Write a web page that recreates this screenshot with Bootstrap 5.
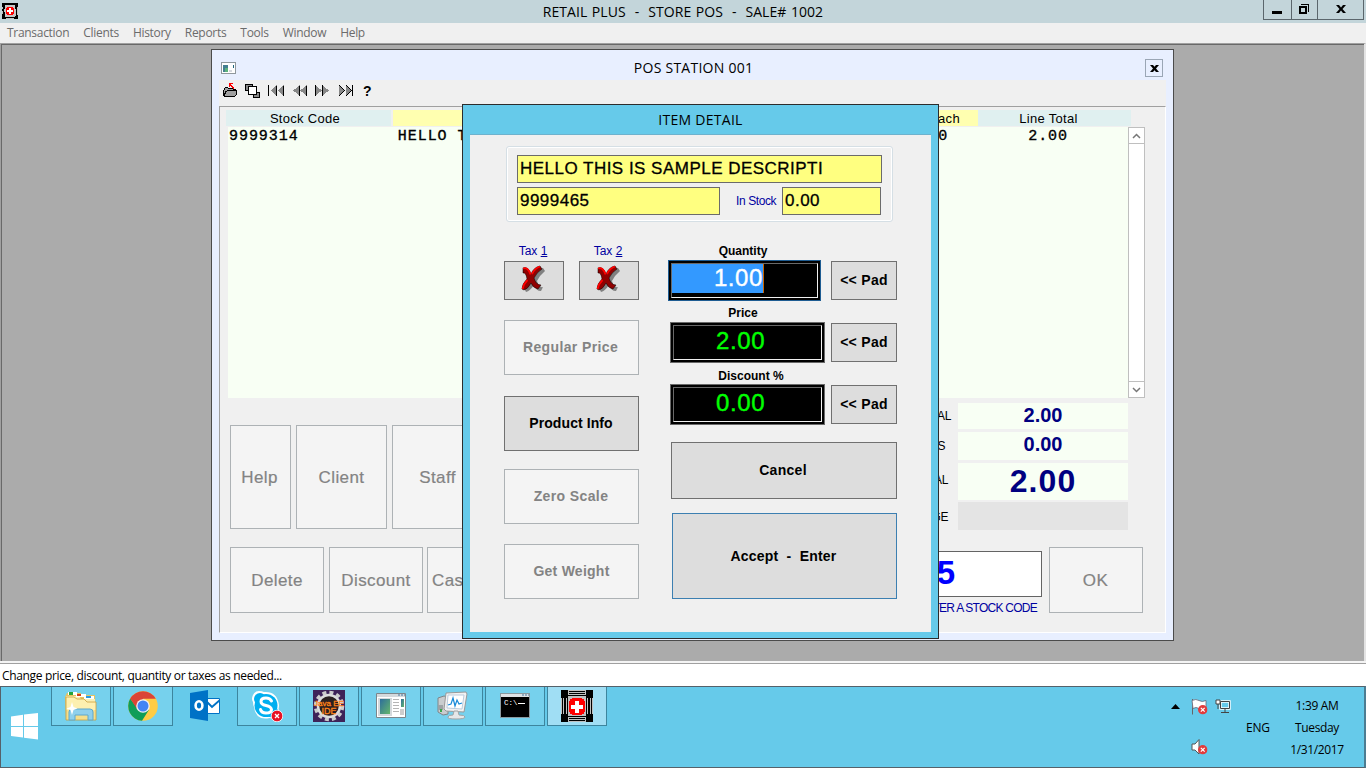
<!DOCTYPE html>
<html lang="en">
<head>
<meta charset="utf-8">
<meta name="viewport" content="width=device-width, initial-scale=1">
<title>Retail Plus - Store POS</title>
<link href="https://cdn.jsdelivr.net/npm/bootstrap@5.3.0/dist/css/bootstrap.min.css" rel="stylesheet">
<style>
html,body{height:768px;overflow:hidden}
body{width:1366px;font-family:"Open Sans","Noto Sans",sans-serif;font-size:12px;line-height:16px;color:#000;background:#ababab}
svg{display:block;flex:none}
.ui-arial{font-family:"Liberation Sans",Arial,sans-serif}
/* main window */
.app-title{height:23px;background:#c3d5da;font-size:14px;line-height:23px}
.app-title .caption{white-space:pre;letter-spacing:.06px;word-spacing:.8px}
.win-ctl{height:20px;border:1px solid #5b666c;border-top:0}
.win-ctl>span{display:flex;align-items:center;justify-content:center;height:19px}
.win-ctl>span+span{border-left:1px solid #5b666c}
.app-menu{height:20px;background:#f0f0f0;color:#6b6b6b;font-size:12px;line-height:20px;padding-left:7px;gap:14px;letter-spacing:-.3px}
.mdi{height:618px;background:#ababab;border-top:1px solid #a0a0a0;border-left:1px solid #a0a0a0;border-right:2px solid #e3e3e3;box-shadow:inset 1px 1px 0 #696969}
.status{height:25px;background:linear-gradient(#f4f4f4 2px,#a0a0a0 2px,#a0a0a0 3px,#fff 3px);padding-top:3px;line-height:24px;padding-left:2px;font-size:12px;letter-spacing:-.34px}
/* station window */
.station{position:absolute;left:210px;top:5px;width:963px;height:592px;background:#e8efff;border:1px solid #4b4b4b;padding:0 7px}
.station-title{height:30px;font-size:14px}
.st-cap{padding:6px 0 0 2px;letter-spacing:.25px}
.close-box{width:18px;height:18px;border:1px solid #9aa6b5;margin:6px 3px 0 auto}
.tools{height:26px;background:#f0f0f0;padding:3px 0 0 3px}
.panel{height:527px;background:#f0f0f0;border:1px solid;border-color:#a0a0a0 #fff #fff #a0a0a0;padding:3px 0 0 6px}
.heads{height:16px;margin-bottom:1px;font-size:13px;line-height:17px;text-align:center;letter-spacing:.3px}
.h-aqua{background:#e0f0f0}.h-yel{background:#ffffb0}
.lines{width:900px;height:271px;margin-left:2px;background:#f8fff4;font:15px/19px "Liberation Mono",monospace;letter-spacing:.95px;-webkit-text-stroke:.35px #000}
.lines>div>span{white-space:pre}
.sbar{width:17px;height:271px;background:#fff;border:1px solid #bfbfbf}
.sbar>span{height:16px;display:flex;align-items:center;justify-content:center}
.pbtn{background:#f4f4f4;border:1px solid #adb2b5;border-radius:0;color:#838383;font-size:17px;line-height:1;letter-spacing:.4px;padding:0;flex:none;display:flex;align-items:center;justify-content:center;-webkit-text-stroke:.2px}
.tall{height:104px}.short{height:66px}
.sum{width:170px;background:#f8fff4;color:#000080;font-weight:700;text-align:center}
.sum-l{width:100px;text-align:right;font-size:12px;letter-spacing:-.4px;padding-right:7px}
.code-in{width:240px;height:46px;background:#fff;border:1px solid #646464;color:#00f;font-weight:700;font-size:33px;line-height:41px;padding-right:86px;text-align:right}
.code-l{color:#0000a0;font-size:12px;text-align:right;padding-right:5px;line-height:22px;letter-spacing:-.75px;white-space:nowrap}
/* item dialog */
.item-dlg{position:absolute;left:461px;top:60px;width:477px;height:535px;background:#66caea;border:1px solid #2c2c2c;padding:0 7px 7px}
.item-cap{height:29px;font-size:14px;line-height:30px;letter-spacing:.28px}
.item-body{height:498px;background:#f0f0f0;border-top:1px solid #6eb2cd}
.group{height:76px;margin:11px 38px 0 36px;border:1px solid #d5dfe5;border-radius:3px;box-shadow:inset 0 0 0 1px #fff;padding:8px 9px 0 10px}
.fld{height:28px;background:#ffff80;border:1px solid #6b6b6b;font-size:17px;line-height:25px;padding-left:2px;letter-spacing:.48px;-webkit-text-stroke:.3px #000}
.navy{color:#0000a0}
.tax{width:60px;padding-right:2px;height:17px;line-height:15px}
.dbtn{background:#ddd;border:1px solid #707070;border-radius:0;color:#000;font-size:14px;font-weight:700;line-height:1;letter-spacing:.08px;padding:0 0 2px;display:flex;align-items:center;justify-content:center;flex:none}
.dbtn.off{background:#f4f4f4;border-color:#adb2b5;color:#838383;letter-spacing:.38px}
.tax-btn{width:60px;height:39px;padding:0 2px 4px 0}
.lbl{font-size:12px;font-weight:700;line-height:14px;height:14px;text-align:center}
.lcd{height:41px;background:#000;border:1px solid #696969;padding:2px;flex:none}
.lcd>div{height:100%;border:1px solid;border-color:#696969 #f0f0f0 #f0f0f0 #696969;color:#0f0;font-size:24px;line-height:29px;letter-spacing:.6px;-webkit-text-stroke:.4px}
.lcd.act{border-color:#1e5c92}
.sel{display:block;background:#39f;color:#fff;height:29px;line-height:28px;text-align:right;border-right:1px solid #c60}
/* taskbar */
.task{height:82px;background:#66caea;border:1px solid #55616a;border-right:2px solid #4c7d92}
.start{width:50px;padding:26px 0 0 9px}
.tb{width:60px;height:39px;margin-right:2px;border:1px solid #3d859e;border-top:0;background:#76d1ed;display:flex;align-items:center;justify-content:center;flex:none}
.tb.plain{background:none;border-color:transparent}
.tb.on{background:#a0def4}
.clock{width:84px;text-align:center;line-height:22px;padding-top:8px;letter-spacing:-.35px;margin-right:5px}
</style>
</head>
<body>
<svg width="0" height="0" class="position-absolute">
 <defs>
  <symbol id="bad" viewBox="0 0 10 10"><circle cx="5" cy="5" r="5" fill="#e23b3b"/><path d="M3 3l4 4M7 3l-4 4" stroke="#fff" stroke-width="1.3"/></symbol>
  <symbol id="cross" viewBox="0 0 25 27"><path d="M6 5q2 0 6 6Q17 3 22 3l2 3q-5 4-8 10 2 7 6 6l-2 4q-5 0-7-6-4 6-8 7l-2-4q5-3 7-8-3-6-5-5z" fill="#808080"/><path d="M2 3q5-2 8 6 3-7 9-8l2 3q-5 3-8 9 2 7 7 7l-3 4q-5-1-7-6-3 6-7 7l-2-1q0-5 5-10Q5 7 2 8z" fill="#900000" stroke="#000" stroke-width=".5"/><path d="M2 3.500q5-2 7.500 6M11 9q3-6 8-7.500M1.500 24q1-5 5-9" fill="none" stroke="#f00" stroke-width="1.800"/></symbol>
 </defs>
</svg>

<header class="app-title position-relative d-flex justify-content-between align-items-start">
 <svg width="16" height="16" viewBox="0 0 16 16" shape-rendering="crispEdges" style="margin:3px 0 0 2px"><path fill="#000" d="M0 0h16v16H0z"/><path fill="#c6c6c6" d="M3 2h10v1h1v10h-1v1H3v-1H2V3h1z"/><path fill="#000" d="M2 3h1v3H2zM13 3h1v3h-1zM2 9h1v4H2z"/><path fill="#c0c0c0" d="M0 4h1v2H0zM0 8h1v3H0zM4 15h8v1H4zM15 4h1v8h-1z"/><path fill="#f00" d="M5 4h6v1h1v6h-1v1H5v-1H4V5h1z"/><path fill="#fff" d="M7 5h2v2h2v2H9v2H7V9H5V7h2z"/></svg>
 <span class="caption position-absolute start-50 translate-middle-x">RETAIL PLUS  -  STORE POS  -  SALE# 1002</span>
 <div class="win-ctl d-flex" style="width:101px;margin-right:2px">
  <span style="width:27px;padding-right:1px"><svg width="10" height="10"><path d="M0 6h10v3H0z"/></svg></span>
  <span style="width:26px;padding:0 2px 2px 0"><svg width="10" height="10" shape-rendering="crispEdges"><path d="M0 2h8v8H0zM2 4v4h4V4z" fill-rule="evenodd"/><path d="M2 0h8v8H9V1H2z"/></svg></span>
  <span class="flex-fill"><svg width="10" height="9"><path d="M0 0h3l2 2.500L7 0h3L6.500 4 10 8H7L5 5.500 3 8H0l3.500-4z"/></svg></span>
 </div>
</header>
<nav class="app-menu d-flex">
 <span>Transaction</span><span>Clients</span><span>History</span><span>Reports</span><span>Tools</span><span>Window</span><span>Help</span>
</nav>

<main class="mdi position-relative overflow-hidden">
 <section class="station">
  <div class="station-title d-flex align-items-center position-relative">
   <svg width="15" height="12" style="margin:5px 0 0 2px" viewBox="0 0 15 12" shape-rendering="crispEdges"><path fill="#8f989d" d="M0 0h15v12H0z"/><path fill="#fff" d="M1 1h13v10H1z"/><path fill="#437f91" d="M2 3h5v7H2z"/><path fill="#5cb27d" d="M4 6h3v4H4z"/><path fill="#d5d8df" d="M8 8h3v2H8z"/><path fill="#23687e" d="M12 3h1v3h-1z"/></svg>
   <span class="position-absolute start-50 translate-middle-x st-cap text-nowrap">POS STATION 001</span>
   <span class="close-box d-flex align-items-center justify-content-center"><svg width="9" height="7"><path d="M0 0h3l1.500 1.800L6 0h3L6 3.500 9 7H6L4.500 5.200 3 7H0l3-3.500z"/></svg></span>
  </div>
  <div class="tools d-flex" style="gap:7px">
   <svg width="16" height="16" viewBox="0 0 16 16" shape-rendering="crispEdges"><path fill="#000" d="M3 4h3v1h6v1h2v1h1v5h-1v1h-1v1H2v-1H1V7h1V5h1z"/><path fill="#a0a0a0" d="M3 5h3v1h5v1H5v1H3v2H2V7h1zM5 8h9v4h-1v1H3v-2h1V9h1z"/><path fill="#f00" d="M7 0h4v1H9v1h1v1h1v1h1v2h-1V5h-1V4H9V3H8v1H7z"/></svg>
   <svg width="16" height="16" viewBox="0 0 16 16" shape-rendering="crispEdges"><path fill="#888" stroke="#000" d="M.5 1.500h7v6h-7zM8.500 9.500h6v5h-6z"/><path fill="#fff" stroke="#000" stroke-width="1" d="M3.500 3.500h8v8h-8z"/></svg>
   <svg width="17" height="16" shape-rendering="crispEdges"><path fill="#888" d="M9 2v11L3 7.500zM16 2v11l-6-5.500z"/><path fill="#000" d="M0 2h1v11H0zM8 3h1v10H8zM15 3h1v10h-1z"/></svg>
   <svg width="16" height="16" shape-rendering="crispEdges"><path fill="#888" d="M8 2v11L1 7.500zM15 2v11L8 7.500z"/><path fill="#000" d="M7 3h1v10H7zM14 3h1v10h-1z"/></svg>
   <svg width="16" height="16" style="margin-left:-1px" shape-rendering="crispEdges"><path fill="#888" d="M1 2v11l7-5.500zM8 2v11l7-5.500z"/><path fill="#000" d="M1 2h1v11H1zM8 2h1v11H8z"/></svg>
   <svg width="16" height="16" style="margin-left:1px" shape-rendering="crispEdges"><path fill="#888" d="M1 2v11l6-5.500zM8 2v11l6-5.500z"/><path fill="none" stroke="#000" d="M1 2l5.500 5.500L1 13M8 2l5.500 5.500L8 13M14.500 2v11"/></svg>
   <b class="ui-arial" style="font-size:14px;margin-left:2px">?</b>
  </div>
  <div class="panel ui-arial">
   <div class="heads d-flex">
    <span class="h-aqua" style="width:165px;margin-right:2px;padding-right:7px">Stock Code</span>
    <span class="h-yel" style="width:521px"></span>
    <span class="h-yel" style="width:64px;padding-right:3px">Each</span>
    <span class="h-aqua" style="width:153px;padding-right:12px">Line Total</span>
   </div>
   <div class="d-flex">
    <div class="lines"><div class="d-flex"><span style="width:170px;padding-left:1px">9999314</span><span style="width:500px">HELLO THIS IS SAMPLE</span><span class="text-end" style="width:51px">2.00</span><span class="text-center" style="width:180px;padding-left:20px">2.00</span></div></div>
    <div class="sbar d-flex flex-column justify-content-between">
     <span style="border-bottom:1px solid #bfbfbf"><svg width="9" height="6"><path d="M1 5l3.500-3.500L8 5" fill="none" stroke="#777" stroke-width="1.500"/></svg></span>
     <span style="border-top:1px solid #bfbfbf"><svg width="9" height="6"><path d="M1 1l3.500 3.500L8 1" fill="none" stroke="#777" stroke-width="1.500"/></svg></span>
    </div>
   </div>
   <div class="d-flex" style="height:149px">
    <div class="d-flex" style="gap:5px;padding:27px 0 0 4px;width:632px">
     <span class="pbtn tall" style="width:61px;padding-right:2px">Help</span><span class="pbtn tall" style="width:91px">Client</span><span class="pbtn tall" style="width:91px">Staff</span>
    </div>
    <div style="padding-top:5px">
     <div class="d-flex" style="margin-bottom:3px"><span class="sum-l" style="line-height:26px">SUB TOTAL</span><span class="sum" style="height:26px;font-size:20px;line-height:25px">2.00</span></div>
     <div class="d-flex" style="margin-bottom:3px"><span class="sum-l" style="line-height:28px;padding-right:13px">TAXES</span><span class="sum" style="height:28px;font-size:20px;line-height:25px">0.00</span></div>
     <div class="d-flex" style="margin-bottom:2px"><span class="sum-l" style="line-height:34px;padding-right:10px">TOTAL</span><span class="sum" style="height:37px;font-size:32px;line-height:37px;letter-spacing:1.1px">2.00</span></div>
     <div class="d-flex"><span class="sum-l" style="line-height:30px;padding-right:10px">CHANGE</span><span class="sum" style="height:28px;background:#e4e4e4"></span></div>
    </div>
   </div>
   <div class="d-flex" style="padding-left:4px">
    <span class="pbtn short" style="width:94px;margin-right:5px">Delete</span><span class="pbtn short" style="width:94px;margin-right:4px">Discount</span><span class="pbtn short justify-content-start" style="width:94px;padding-left:4px">Cash In</span>
    <div style="margin-left:281px;padding-top:4px"><div class="code-in">9999465</div><div class="code-l">ENTER A STOCK CODE</div></div>
    <span class="pbtn short" style="width:94px;margin-left:7px;padding-right:1px">OK</span>
   </div>
  </div>
 </section>

 <section class="item-dlg">
  <div class="item-cap text-center">ITEM DETAIL</div>
  <div class="item-body ui-arial">
   <div class="group">
    <div class="fld" style="width:365px;margin-bottom:4px">HELLO THIS IS SAMPLE DESCRIPTI</div>
    <div class="d-flex"><div class="fld" style="width:203px">9999465</div><span class="navy text-nowrap" style="width:62px;padding-left:16px;line-height:28px;letter-spacing:-.4px">In Stock</span><div class="fld" style="width:99px">0.00</div></div>
   </div>
   <div class="d-flex" style="margin-left:34px;padding-top:22px">
    <div style="width:164px">
     <div class="d-flex" style="gap:15px">
      <div><div class="navy text-center tax">Tax <u>1</u></div><span class="dbtn tax-btn"><svg width="25" height="27"><use href="#cross"/></svg></span></div>
      <div><div class="navy text-center tax">Tax <u>2</u></div><span class="dbtn tax-btn"><svg width="25" height="27"><use href="#cross"/></svg></span></div>
     </div>
     <span class="dbtn off" style="width:135px;height:55px;margin-top:20px;padding-right:2px">Regular Price</span>
     <span class="dbtn" style="width:135px;height:55px;margin-top:21px;padding-right:1px">Product Info</span>
     <span class="dbtn off" style="width:135px;height:55px;margin-top:18px;padding-right:1px">Zero Scale</span>
     <span class="dbtn off" style="width:135px;height:55px;margin-top:20px;letter-spacing:.25px">Get Weight</span>
    </div>
    <div>
     <div class="lbl" style="width:150px;margin-bottom:2px">Quantity</div>
     <div class="d-flex"><div class="lcd act" style="width:153px"><div><span class="sel" style="width:92px">1.00</span></div></div><span class="dbtn" style="width:66px;height:39px;margin:1px 0 0 10px;letter-spacing:.3px">&lt;&lt; Pad</span></div>
     <div class="lbl" style="width:150px;margin:5px 0 2px">Price</div>
     <div class="d-flex" style="margin-left:2px"><div class="lcd" style="width:155px"><div style="padding-left:42px">2.00</div></div><span class="dbtn" style="width:66px;height:39px;margin:1px 0 0 6px;letter-spacing:.3px">&lt;&lt; Pad</span></div>
     <div class="lbl" style="width:166px;margin:6px 0 1px">Discount %</div>
     <div class="d-flex" style="margin-left:2px"><div class="lcd" style="width:155px"><div style="padding-left:42px">0.00</div></div><span class="dbtn" style="width:66px;height:39px;margin:1px 0 0 6px;letter-spacing:.3px">&lt;&lt; Pad</span></div>
     <span class="dbtn" style="width:226px;height:57px;margin:17px 0 14px 3px;padding-right:2px;letter-spacing:.3px">Cancel</span>
     <span class="dbtn" style="width:225px;height:86px;margin-left:4px;padding:0 2px 0 0;border-color:#3c7fb1;white-space:pre;letter-spacing:.2px">Accept  -  Enter</span>
    </div>
   </div>
  </div>
 </section>
</main>

<div class="status">Change price, discount, quantity or taxes as needed...</div>

<footer class="task d-flex">
 <div class="start"><svg width="28" height="28"><path fill="#fff" d="M1 3.500l12-1.700V13H1zM14 1.600L28 0v13H14zM1 14h12v10.500L1 23zM14 14h14v12.500L14 24.700z"/></svg></div>
 <span class="tb"><svg width="34" height="32" viewBox="0 0 34 32"><path fill="#e8c35e" d="M3 3h14v2h14l1 25H2L1 7z"/><path fill="#faf0b5" d="M2 6h13l2 3h14v21H2z"/><path fill="#f5df8c" d="M2 14h30v16H2z"/><path fill="#fff" d="M4 2h9v3H4zM12 4h10v3H12zM20 6h10v3H20z"/><path fill="#23a33a" d="M5 2h4v3H5z"/><path fill="#d04020" d="M13 4h4v2h-4z"/><path fill="#2b9be0" d="M22 6h5v2h-5z"/><path fill="#fdf0b0" d="M2 7h8l3 2h7l3 3h9v8H2z"/><path fill="none" stroke="#c9a040" stroke-width=".8" d="M2 7h8l3 2h7l3 3h9v18H2z"/><path fill="#8fd0ec" stroke="#5fa8cc" d="M5 30V22q0-3 3-3h18q3 0 3 3v8h-5v-5H11v5z"/><path fill="#fff" d="M8 12l1.500 5 4 1.500-4 1.500L8 25l-1.500-5-4-1.500 4-1.500z"/></svg></span>
 <span class="tb"><svg width="30" height="30" viewBox="0 0 30 30"><circle cx="15" cy="15" r="14.800" fill="#fc4"/><path fill="#0f9d58" d="M15 15l-5 3L2.200 7.600A14.800 14.800 0 0 0 14 29.800l7-11z"/><path fill="#db4437" d="M2.200 7.600A14.800 14.800 0 0 1 27.800 7.800H15L9 18z"/><circle cx="15" cy="15" r="6.800" fill="#f1f1f1"/><circle cx="15" cy="15" r="5.500" fill="#4285f4"/></svg></span>
 <span class="tb plain"><svg width="30" height="32" viewBox="0 0 30 32"><path fill="#fff" stroke="#0072c6" d="M16 8.500h13.500v15H16z"/><path fill="none" stroke="#0072c6" stroke-width="2" d="M16 11l6 6 8-7"/><path fill="#0072c6" d="M0 3l18-3v31L0 28z"/><ellipse cx="9" cy="15.500" rx="3.400" ry="4.300" fill="none" stroke="#fff" stroke-width="2.600"/></svg></span>
 <span class="tb"><svg width="32" height="32" viewBox="0 0 32 32"><path fill="#fff" d="M8 1q3 0 5 1 13-1 15 13 0 2-.5 4 2 4-1 7t-8 2Q5 31 3 17 2 15 2 12 0 9 2 5t6-4z"/><circle cx="15" cy="15.500" r="11.500" fill="#00aff0"/><circle cx="9" cy="9" r="6" fill="#00aff0"/><circle cx="21" cy="21.500" r="6" fill="#00aff0"/><path d="M20.500 11q-1.500-3-5.500-3-5 0-5 3.500 0 3 5 4t5.500 4Q20.500 23 15 23q-4.500 0-5.500-3.500" fill="none" stroke="#fff" stroke-width="3" stroke-linecap="round"/><circle cx="26" cy="26" r="5.800" fill="#e81123" stroke="#fff" stroke-width=".8"/><path d="M24 24l4 4M28 24l-4 4" stroke="#fff" stroke-width="1.300"/></svg></span>
 <span class="tb"><svg width="32" height="32" viewBox="0 0 32 32"><path fill="#3e2359" d="M0 0h32v32H0z"/><circle cx="16" cy="16" r="13.500" fill="none" stroke="#ccc" stroke-width="3.500" stroke-dasharray="4 3.070"/><circle cx="16" cy="16" r="11" fill="#2a2020" stroke="#ddd" stroke-width="2.500"/><text x="16" y="15.500" text-anchor="middle" font-family="Liberation Sans" font-size="8" fill="#ff9028" stroke="#ff7c10" stroke-width=".3">Java EE</text><text x="16" y="24" text-anchor="middle" font-family="Liberation Sans" font-size="9" fill="#ff9028" stroke="#ff7c10" stroke-width=".3">IDE</text></svg></span>
 <span class="tb"><svg width="30" height="26" viewBox="0 0 30 26"><defs><linearGradient id="gb" x2="1" y2="1"><stop stop-color="#2d6d9c"/><stop offset="1" stop-color="#65b76c"/></linearGradient></defs><path fill="#fff" stroke="#7c868b" d="M.5.5h29v24H.5z"/><path fill="#d4d9dc" d="M1 1h28v3H1zM2 5h14v18H2z"/><path fill="url(#gb)" d="M4 6h10v15H4z"/><path stroke="#b5b5b5" d="M17 6.500h6M17 9.500h6M17 12.500h6M17 15.500h6M17 18.500h6"/><path fill="url(#gb)" d="M25 6h3v8h-3z"/><path fill="#cdcdcd" d="M24 16h4v6h-4z"/><path stroke="#44749c" stroke-dasharray="2 1" d="M22 2h7"/></svg></span>
 <span class="tb"><svg width="32" height="30" viewBox="0 0 32 30"><path fill="#c9ccce" stroke="#7f8588" d="M1 7l6-2 4 1v17l-5 1-5-3z"/><path fill="#9da2a5" d="M1 14h5v5H1z"/><path fill="#39a84a" d="M3 18h2v3H3z"/><path fill="#f2f2f2" stroke="#999" d="M9 2l20-1 1 2-3 18-18-1-2-2z"/><path fill="#fff" stroke="#bcd" d="M11 4h16l-2 14-15-1z"/><path d="M11 14l3-1 2-6 2 8 2-6 2 4 3-1" fill="none" stroke="#1689d8" stroke-width="1.200"/><path fill="#e5e7e8" stroke="#a0a4a6" d="M17 20h4l1 4q6 0 6 2t-9 2-8-2q0-2 5-2z"/></svg></span>
 <span class="tb"><svg width="30" height="26" viewBox="0 0 30 26"><path d="M.5.5h29v24H.5z" stroke="#8c9aa0"/><path fill="#dfe3e6" d="M1 1h28v3H1z"/><path stroke="#44749c" stroke-dasharray="2 1" d="M22 2h7"/><text x="4" y="11.500" font-family="Liberation Mono" font-size="7.500" fill="#fff">C:\</text><path fill="#fff" d="M18 10h7v1h-7z"/></svg></span>
 <span class="tb on"><svg width="32" height="32" viewBox="0 0 32 32" shape-rendering="crispEdges"><path d="M0 0h32v32H0z"/><path fill="#c0c0c0" d="M7 0h18v5H7zM5 6h22v20H5zM7 27h18v5H7zM0 8h4v16H0zM28 8h4v16h-4z"/><path d="M8 1h16v1H8zM8 3h16v1H8zM8 28h16v1H8zM8 30h16v1H8zM1 8h1v16H1zM3 7h1v18H3zM30 8h1v16h-1zM28 7h1v18h-1zM5 6h2v2H5zM25 6h2v2h-2zM5 24h2v2H5zM25 24h2v2h-2zM6 8h1v16H6zM25 8h1v16h-1z"/><path fill="#f00" d="M11 8h10v1h2v2h1v11h-1v2h-2v1H11v-1H9v-2H8V11h1V9h2z"/><path fill="#fff" d="M14 11h4v4h4v4h-4v4h-4v-4h-4v-4h4z"/></svg></span>
 <div class="ms-auto d-flex">
  <div class="d-flex flex-wrap align-content-start" style="width:65px;padding-top:12px">
   <svg width="9" height="5" style="margin:5px 11px 0 0"><path d="M0 5l4.500-5L9 5z"/></svg>
   <svg width="17" height="16" style="margin-right:7px" viewBox="0 0 17 16"><path d="M1.500 0v15.500" stroke="#666"/><path d="M1 1.500q4-2 7 0t7 0v8q-4 2-7 0t-6 0z" fill="#fff" stroke="#667" stroke-width=".8"/><use href="#bad" x="7" y="6" width="9.500" height="9.500"/></svg>
   <svg width="16" height="16" viewBox="0 0 16 16"><path d="M5.500 2.500h9v7h-9z" fill="#66caea" stroke="#fff" stroke-width="2.400"/><path d="M5.500 2.500h9v7h-9zM10 10v3M6 13.500h8" fill="none" stroke="#444"/><path d="M1 1h4v4H1zM3 5v5" fill="#fff" stroke="#444"/></svg>
   <svg width="17" height="16" style="margin:24px 0 0 20px" viewBox="0 0 17 16"><path d="M1 5h3l4-4.500v14.500L4 11H1z" fill="#fff" stroke="#555"/><use href="#bad" x="7" y="6" width="9.500" height="9.500"/></svg>
  </div>
  <span style="width:35px;padding:33px 0 0 10px;margin-right:4px;letter-spacing:-.2px">ENG</span>
  <div class="clock">1:39 AM<br>Tuesday<br>1/31/2017</div>
 </div>
</footer>
<script src="https://cdn.jsdelivr.net/npm/bootstrap@5.3.0/dist/js/bootstrap.bundle.min.js"></script>
</body>
</html>
